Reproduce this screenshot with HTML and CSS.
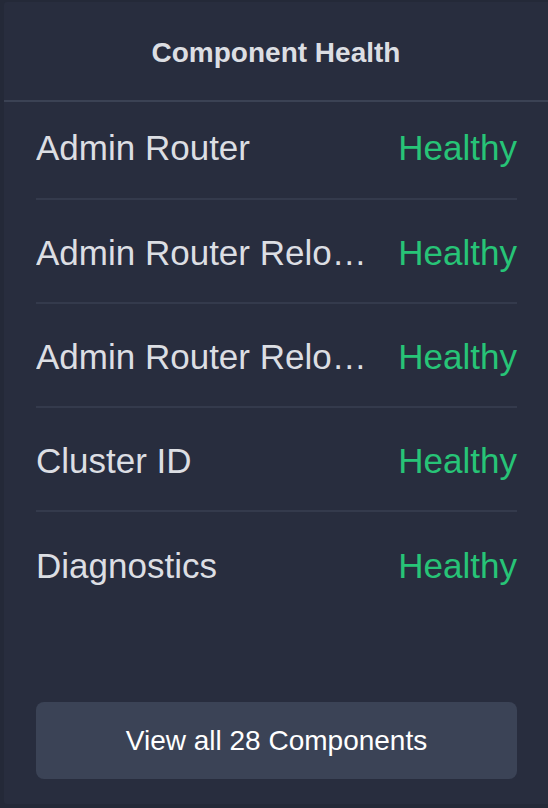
FILE: index.html
```html
<!DOCTYPE html>
<html>
<head>
<meta charset="utf-8">
<link rel="stylesheet" href="styles.css">
</head>
<body>
<div class="card">
  <div class="card-header">Component Health</div>
  <ul class="list">
    <li class="row"><span class="name">Admin Router</span><span class="status">Healthy</span></li>
    <li class="row"><span class="name">Admin Router Reloader</span><span class="status">Healthy</span></li>
    <li class="row"><span class="name">Admin Router Reloader Timer</span><span class="status">Healthy</span></li>
    <li class="row"><span class="name">Cluster ID</span><span class="status">Healthy</span></li>
    <li class="row"><span class="name">Diagnostics</span><span class="status">Healthy</span></li>
  </ul>
  <button class="view-all">View all 28 Components</button>
</div>
</body>
</html>
```
FILE: styles.css
```css
html, body {
  margin: 0;
  padding: 0;
  background: #242938;
  height: 100%;
}
body {
  padding: 2px 0 4px 4px;
  box-sizing: border-box;
  font-family: "Liberation Sans", Arial, sans-serif;
}
.card {
  height: 802px;
  background: #282d3e;
  display: flex;
  flex-direction: column;
  border-radius: 3px 0 0 3px;
}
.card-header {
  height: 100px;
  border-bottom: 2px solid #3b4254;
  display: flex;
  align-items: center;
  justify-content: center;
  color: #dcdee3;
  font-weight: bold;
  font-size: 28px;
  box-sizing: border-box;
  padding-top: 4px;
}
.list {
  list-style: none;
  margin: 0;
  padding: 0 31px 0 32px;
}
.row {
  display: flex;
  align-items: center;
  box-sizing: border-box;
  height: 104px;
  padding-top: 4px;
  border-bottom: 2px solid #343a4c;
  gap: 30px;
  font-size: 35px;
}
.row:first-child {
  height: 98px;
  padding-top: 0;
  padding-bottom: 4px;
}
.row:last-child {
  border-bottom: none;
}
.name {
  flex: 1;
  min-width: 0;
  color: #dcdee3;
  white-space: nowrap;
  overflow: hidden;
  text-overflow: ellipsis;
}
.status {
  color: #27c477;
}
.view-all {
  margin: auto 31px 25px 32px;
  height: 77px;
  background: #3b4356;
  border: none;
  border-radius: 8px;
  color: #ffffff;
  font-family: "Liberation Sans", Arial, sans-serif;
  font-size: 28px;
  padding: 0;
}
```
